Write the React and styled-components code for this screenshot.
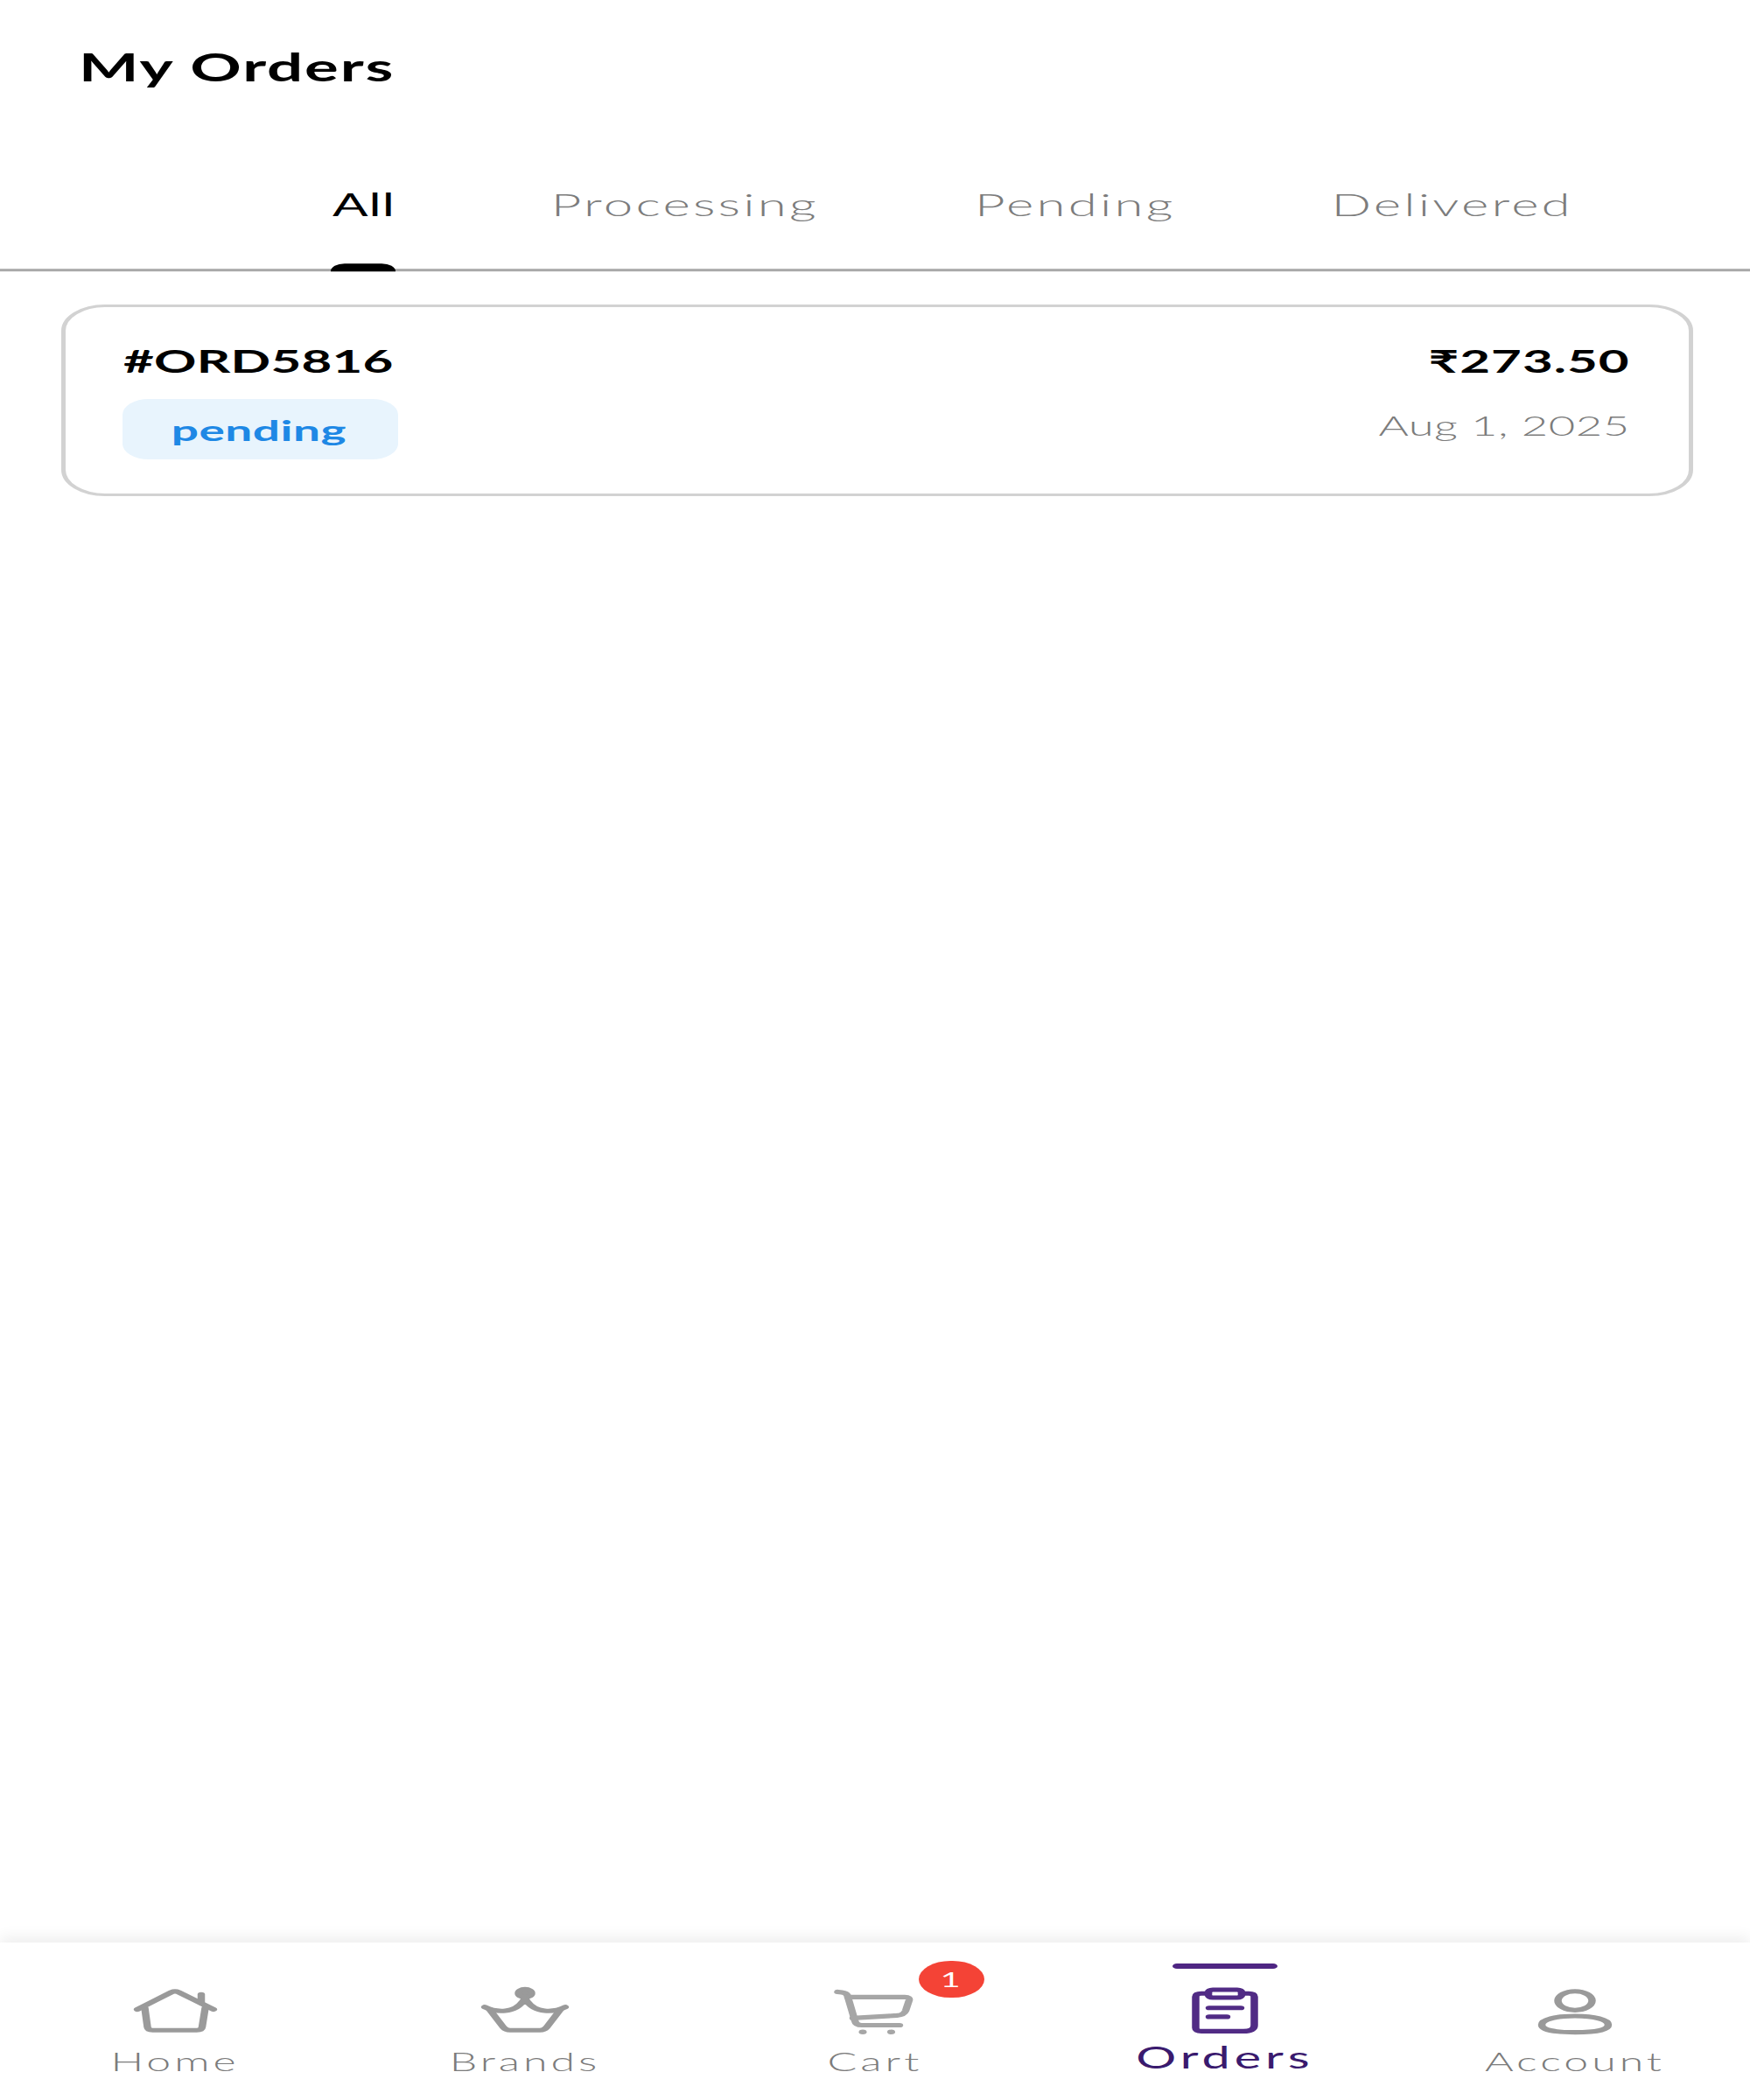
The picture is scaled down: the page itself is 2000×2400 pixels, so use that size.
import styled, { createGlobalStyle } from "styled-components";

const GlobalStyle = createGlobalStyle`
  html, body {
    margin: 0;
    padding: 0;
    background: #ffffff;
  }
`;

const tabs = ["All", "Processing", "Pending", "Delivered"];

function HomeIcon() {
  return (
    <NavSvg viewBox="0 0 24 24" $color="#9a9a9a">
      <path d="M3.4 11.5 L11.2 4.9 Q12 4.3 12.8 4.9 L20.8 11.5" />
      <path d="M18 5.8 V9" />
      <path d="M5.1 11 L5.7 18.2 Q5.8 19.4 6.9 19.4 H17 Q18.1 19.4 18.2 18.2 L18.9 11" />
    </NavSvg>
  );
}

function CrownIcon() {
  return (
    <NavSvg viewBox="0 0 24 24" $color="#9a9a9a">
      <circle cx="12" cy="5.3" r="1.5" fill="#9a9a9a" />
      <path d="M2.8 10.6 Q5 12.4 7.5 12 Q10.5 11.6 12 7.2 Q13.5 11.6 16.5 12 Q19 12.4 21.2 10.6" />
      <path d="M3.9 11.5 L7.1 18.4 Q7.6 19.4 8.6 19.4 H15.4 Q16.4 19.4 16.9 18.4 L20.1 11.5" />
    </NavSvg>
  );
}

function CartIcon() {
  return (
    <NavSvg viewBox="0 0 24 24" $color="#a6a6a6">
      <path d="M3.5 4.8 L4.4 5 Q5.4 5.2 5.7 6.2 L7.4 15.8 Q7.6 17.5 9 17.5 H17.6" />
      <path d="M5.8 6.8 H18.8 Q20 6.8 19.8 8 L19 12 Q18.6 13.6 17 13.8 L7 14.8" />
      <circle cx="9.2" cy="20.1" r="0.9" fill="#a6a6a6" stroke="none" />
      <circle cx="15.7" cy="20.1" r="0.9" fill="#a6a6a6" stroke="none" />
    </NavSvg>
  );
}

function OrdersIcon() {
  return (
    <NavSvg viewBox="0 0 24 24" $color="#512b85">
      <path d="M8.2 5.4 H6.6 Q5.3 5.4 5.3 6.7 V18.5 Q5.3 19.8 6.6 19.8 H16.2 Q18.7 19.8 18.7 17.6 V6.7 Q18.7 5.4 17.4 5.4 H15.8" />
      <rect x="8.2" y="4" width="7.6" height="3" rx="1" />
      <path d="M8.4 10.9 H15.6" />
      <path d="M8.4 14.3 H12.4" />
    </NavSvg>
  );
}

function AccountIcon() {
  return (
    <NavSvg viewBox="0 0 24 24" $color="#9a9a9a">
      <ellipse cx="12" cy="8.2" rx="3.9" ry="3.6" />
      <path d="M12 14 C16.5 14 19.6 15.4 19.6 17.3 C19.6 19.2 17 20.2 12 20.2 C7 20.2 4.4 19.2 4.4 17.3 C4.4 15.4 7.5 14 12 14Z" />
    </NavSvg>
  );
}

export default function App() {
  return (
    <Stage>
      <GlobalStyle />
      <Screen>
        <Title>My Orders</Title>
        <TabBar>
          {tabs.map((tab, i) => (
            <Tab key={tab} $active={i === 0}>
              {tab}
              {i === 0 && <TabIndicator />}
            </Tab>
          ))}
        </TabBar>
        <OrderList>
          <OrderCard>
            <OrderLeft>
              <OrderId>#ORD5816</OrderId>
              <StatusBadge>pending</StatusBadge>
            </OrderLeft>
            <OrderRight>
              <Price>₹273.50</Price>
              <OrderDate>Aug 1, 2025</OrderDate>
            </OrderRight>
          </OrderCard>
        </OrderList>
        <BottomNav>
          <NavItem>
            <HomeIcon />
            <NavLabel>Home</NavLabel>
          </NavItem>
          <NavItem>
            <CrownIcon />
            <NavLabel>Brands</NavLabel>
          </NavItem>
          <NavItem>
            <CartIcon />
            <CartCount>1</CartCount>
            <NavLabel>Cart</NavLabel>
          </NavItem>
          <NavItem>
            <ActiveBar />
            <OrdersIcon />
            <NavLabel $active>Orders</NavLabel>
          </NavItem>
          <NavItem>
            <AccountIcon />
            <NavLabel>Account</NavLabel>
          </NavItem>
        </BottomNav>
      </Screen>
    </Stage>
  );
}

const Stage = styled.div`
  width: 2000px;
  height: 2400px;
  overflow: hidden;
`;

/* the capture is a 400x800 phone screen stretched to 2000x2400 */
const Screen = styled.div`
  width: 400px;
  height: 800px;
  display: flex;
  flex-direction: column;
  background: #ffffff;
  font-family: "Lato", sans-serif;
  transform: scale(5, 3);
  transform-origin: top left;
`;

const Title = styled.h1`
  margin: 0;
  padding: 16.7px 0 0 18px;
  height: 47px;
  box-sizing: border-box;
  font-size: 14.5px;
  line-height: 18px;
  font-weight: 700;
  color: #000000;
  letter-spacing: 0.37px;
`;

const TabBar = styled.div`
  height: 56.4px;
  box-sizing: border-box;
  display: flex;
  align-items: flex-start;
  gap: 35.6px;
  padding: 22.5px 0 0 76px;
  border-bottom: 1px solid #a9a9a9;
  transform: translateY(0.4px);
`;

const Tab = styled.div`
  position: relative;
  height: 32.9px;
  font-size: 12px;
  line-height: 15px;
  font-weight: ${(props) => (props.$active ? 400 : 300)};
  color: ${(props) => (props.$active ? "#000000" : "#7c7c7c")};
  letter-spacing: ${(props) => (props.$active ? "0.2px" : "0.64px")};
`;

const TabIndicator = styled.span`
  position: absolute;
  left: 0;
  bottom: -1px;
  width: 14px;
  height: 3px;
  background: #000000;
  border-radius: 4px 4px 0 0;
  transform: scaleX(1.06);
`;

const OrderList = styled.div`
  flex: 1;
  padding: 12.6px 13.2px 0 13.6px;
`;

const OrderCard = styled.div`
  height: 73px;
  box-sizing: border-box;
  display: flex;
  justify-content: space-between;
  padding: 13.3px 13.3px 0 13.1px;
  background: #ffffff;
  border: 1px solid #d2d2d2;
  border-radius: 10px;
`;

const OrderLeft = styled.div`
  display: flex;
  flex-direction: column;
  align-items: flex-start;
`;

const OrderRight = styled.div`
  display: flex;
  flex-direction: column;
  align-items: flex-end;
`;

const OrderId = styled.div`
  padding-left: 0.5px;
  font-size: 12px;
  line-height: 16px;
  font-weight: 700;
  color: #000000;
  letter-spacing: 0.05px;
`;

const StatusBadge = styled.div`
  margin-top: 6px;
  width: 63px;
  height: 23px;
  display: flex;
  align-items: center;
  justify-content: center;
  background: #e8f4fd;
  border-radius: 6px;
  font-size: 11px;
  font-weight: 700;
  color: #1e88e5;
  letter-spacing: 0.1px;
`;

const Price = styled.div`
  font-size: 12px;
  line-height: 16px;
  font-weight: 700;
  color: #000000;
  letter-spacing: 0.2px;
`;

const OrderDate = styled.div`
  margin-top: 8.8px;
  font-size: 10.5px;
  line-height: 14px;
  font-weight: 300;
  color: #7c7c7c;
  letter-spacing: 0.1px;
`;

const BottomNav = styled.nav`
  height: 60px;
  flex: none;
  box-sizing: border-box;
  display: grid;
  grid-template-columns: repeat(5, 1fr);
  padding-top: 13.5px;
  background: #ffffff;
  box-shadow: 0 -2px 4px rgba(0, 0, 0, 0.07);
`;

const NavItem = styled.div`
  position: relative;
  display: flex;
  flex-direction: column;
  align-items: center;
`;

const NavSvg = styled.svg`
  width: 24px;
  height: 24px;
  fill: none;
  stroke: ${(props) => props.$color};
  stroke-width: 1.7;
  stroke-linecap: round;
  stroke-linejoin: round;
`;

const NavLabel = styled.span`
  margin-top: ${(props) => (props.$active ? "0px" : "1.3px")};
  font-size: ${(props) => (props.$active ? "11.5px" : "10px")};
  line-height: 12px;
  font-weight: ${(props) => (props.$active ? 400 : 300)};
  color: ${(props) => (props.$active ? "#3a1a6e" : "#7c7c7c")};
  letter-spacing: ${(props) => (props.$active ? "1px" : "0.8px")};
`;

const ActiveBar = styled.span`
  position: absolute;
  top: -6px;
  left: 28px;
  width: 24px;
  height: 2.5px;
  border-radius: 2px;
  background: #4f2683;
`;

const CartCount = styled.span`
  position: absolute;
  top: -6.5px;
  left: 50px;
  width: 14.5px;
  height: 14px;
  display: flex;
  align-items: center;
  justify-content: center;
  border-radius: 50%;
  background: #f44336;
  color: #ffffff;
  font-size: 8px;
  font-weight: 400;
`;
